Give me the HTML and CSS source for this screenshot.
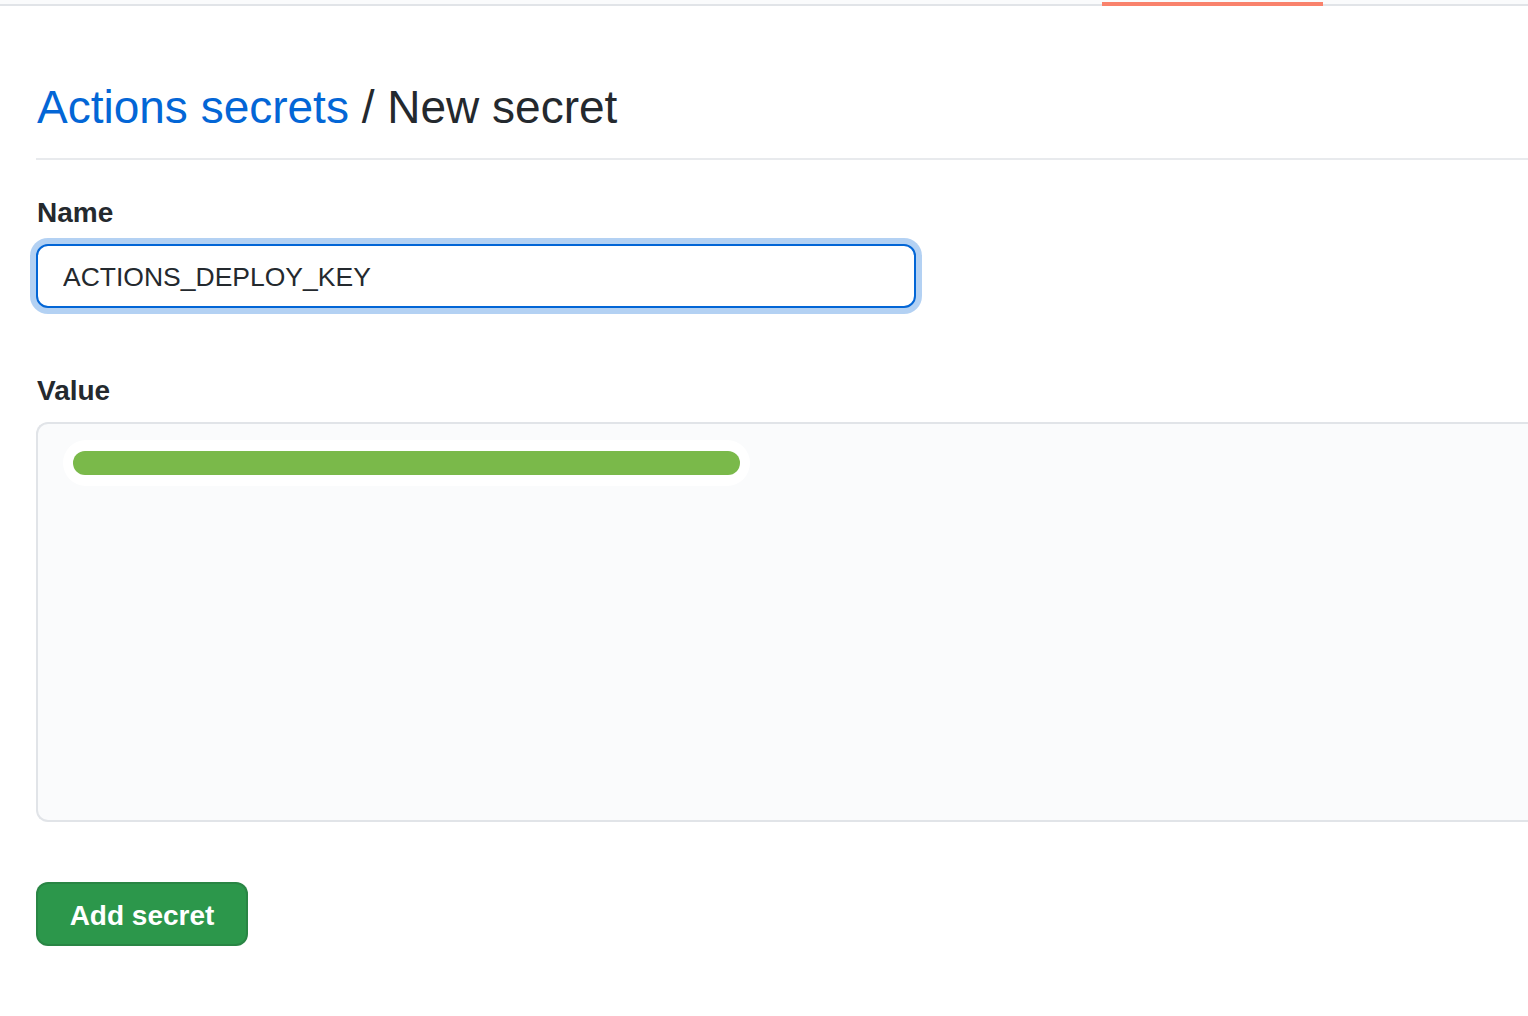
FILE: index.html
```html
<!DOCTYPE html>
<html lang="en">
<head>
<meta charset="utf-8">
<title>New secret</title>
<link rel="stylesheet" href="styles.css">
</head>
<body>
<nav class="tabnav">
  <span class="tab-selected"></span>
</nav>
<main class="page">
  <h1 class="page-title"><a class="crumb" href="#">Actions secrets</a> / New secret</h1>
  <form class="secret-form">
    <label class="field-label" for="secret-name">Name</label>
    <div class="input-wrap">
      <input id="secret-name" class="text-input" type="text" value="ACTIONS_DEPLOY_KEY">
    </div>
    <label class="field-label value-label">Value</label>
    <div class="value-box">
      <div class="redact-pill"><div class="redact-bar"></div></div>
    </div>
    <button class="btn-primary" type="button">Add secret</button>
  </form>
</main>
</body>
</html>
```

FILE: styles.css
```css
html, body {
  margin: 0;
  padding: 0;
  background: #ffffff;
}

body {
  font-family: "Liberation Sans", Arial, sans-serif;
  color: #24292e;
}

.tabnav {
  display: flex;
  height: 4px;
  background: #fafbfc;
  border-bottom: 2px solid #e1e4e8;
}

.tab-selected {
  display: block;
  margin-left: 1102px;
  margin-top: 2px;
  width: 221px;
  height: 4px;
  background: #f9826c;
  flex: none;
}

.page {
  padding-left: 36px;
}

.page-title {
  margin: 71px 0 0 0;
  padding: 0 0 21px 1px;
  font-size: 46px;
  font-weight: 400;
  line-height: 60px;
  color: #24292e;
  border-bottom: 2px solid #e8eaed;
}

.crumb {
  color: #0366d6;
  text-decoration: none;
}

.secret-form {
  display: flex;
  flex-direction: column;
  align-items: flex-start;
}

.field-label {
  display: block;
  margin-top: 32px;
  padding-left: 1px;
  font-size: 28px;
  font-weight: 700;
  line-height: 42px;
  color: #24292e;
}

.value-label {
  margin-top: 62px;
}

.input-wrap {
  margin-top: 10px;
}

.text-input {
  box-sizing: border-box;
  display: block;
  width: 880px;
  height: 64px;
  margin: 0;
  padding: 2px 25px 0;
  font-family: "Liberation Sans", Arial, sans-serif;
  font-size: 26.5px;
  color: #24292e;
  background: #ffffff;
  border: 2px solid #0366d6;
  border-radius: 12px;
  box-shadow: 0 0 0 6px rgba(3, 102, 214, 0.3);
  outline: none;
}

.value-box {
  box-sizing: border-box;
  align-self: stretch;
  margin-top: 10px;
  height: 400px;
  padding: 16px 25px;
  background: #fafbfc;
  border: 2px solid #e1e4e8;
  border-right: none;
  border-radius: 12px 0 0 12px;
}

.redact-pill {
  display: inline-flex;
  padding: 11px 10px;
  background: #ffffff;
  border-radius: 23px;
}

.redact-bar {
  width: 667px;
  height: 24px;
  background: #7ab94a;
  border-radius: 12px;
}

.btn-primary {
  box-sizing: border-box;
  margin-top: 60px;
  width: 212px;
  height: 64px;
  padding: 3px 0 0;
  font-family: "Liberation Sans", Arial, sans-serif;
  font-size: 28px;
  font-weight: 700;
  color: #ffffff;
  background: #2c974b;
  border: 2px solid rgba(27, 31, 35, 0.15);
  border-radius: 12px;
  cursor: pointer;
}
```
